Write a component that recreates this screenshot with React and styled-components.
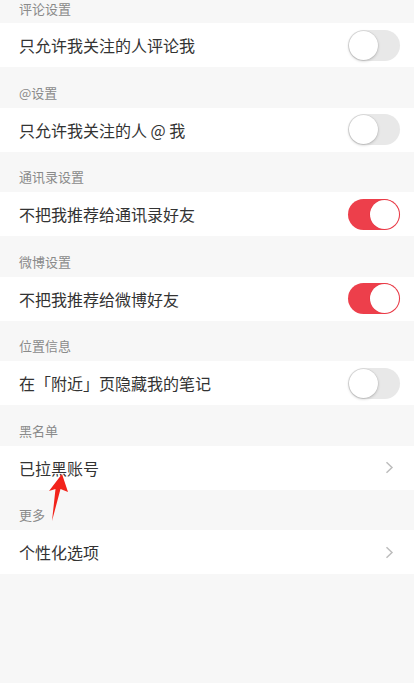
import React from "react";
import styled, { createGlobalStyle } from "styled-components";

const Global = createGlobalStyle`
  html, body { margin: 0; padding: 0; background: #f7f7f7; }
  body { font-family: "Noto Sans CJK SC", "Noto Sans", sans-serif; }
`;

const Page = styled.div`
  position: relative;
  width: 414px;
  min-height: 683px;
  background: #f7f7f7;
  overflow: hidden;
`;

const SectionHeader = styled.div`
  height: ${(p) => (p.$first ? "23px" : "40.5px")};
  box-sizing: border-box;
  display: flex;
  align-items: flex-end;
  padding: 0 19px ${(p) => (p.$first ? "5px" : "6px")};
  font-size: 13px;
  line-height: 18px;
  color: #8a8a8a;
`;

const Row = styled.div`
  height: 44px;
  background: #fff;
  display: flex;
  align-items: center;
  justify-content: space-between;
  padding: 0 14px 0 19px;
  box-sizing: border-box;
`;

const Label = styled.span`
  font-size: 16px;
  color: #333;
`;

const Track = styled.div`
  position: relative;
  width: 52px;
  height: 31px;
  border-radius: 16px;
  box-sizing: border-box;
  background: ${(p) => (p.$on ? "#ed3f4b" : "#e8e8e8")};
`;

const Knob = styled.div`
  position: absolute;
  top: 1px;
  left: ${(p) => (p.$on ? "22px" : "1px")};
  width: 29px;
  height: 29px;
  border-radius: 50%;
  background: #fff;
  box-shadow: ${(p) =>
    p.$on ? "0 0 0 0.5px #e33541" : "0 1px 3px rgba(0,0,0,0.22), 0 0 0 0.5px rgba(0,0,0,0.08)"};
`;

const Chevron = styled.svg`
  width: 9px;
  height: 13px;
  margin-right: 6px;
`;

const Arrow = styled.svg`
  position: absolute;
  left: 44px;
  top: 470px;
  width: 30px;
  height: 56px;
`;

const Toggle = ({ on }) => (
  <Track $on={on}>
    <Knob $on={on} />
  </Track>
);

const ChevronIcon = () => (
  <Chevron viewBox="0 0 9 13">
    <path d="M1.5 1.2 L7 6.5 L1.5 11.8" fill="none" stroke="#bdbdbd" strokeWidth="1.5" />
  </Chevron>
);

const sections = [
  { title: "评论设置", label: "只允许我关注的人评论我", type: "toggle", on: false },
  { title: "@设置", label: "只允许我关注的人 @ 我", type: "toggle", on: false },
  { title: "通讯录设置", label: "不把我推荐给通讯录好友", type: "toggle", on: true },
  { title: "微博设置", label: "不把我推荐给微博好友", type: "toggle", on: true },
  { title: "位置信息", label: "在「附近」页隐藏我的笔记", type: "toggle", on: false },
  { title: "黑名单", label: "已拉黑账号", type: "link" },
  { title: "更多", label: "个性化选项", type: "link" },
];

export default function App() {
  return (
    <Page>
      <Global />
      {sections.map((s, i) => (
        <React.Fragment key={s.title}>
          <SectionHeader $first={i === 0}>{s.title}</SectionHeader>
          <Row>
            <Label>{s.label}</Label>
            {s.type === "toggle" ? <Toggle on={s.on} /> : <ChevronIcon />}
          </Row>
        </React.Fragment>
      ))}
      <Arrow viewBox="44 470 30 56">
        <path d="M62 474 L68 492 L60.5 489 L52 521 L55.5 489 L49 491 Z" fill="#f2231b" />
      </Arrow>
    </Page>
  );
}
